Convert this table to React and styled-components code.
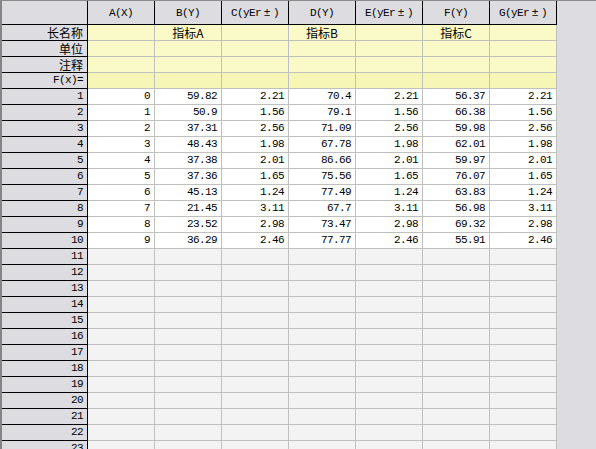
import React from "react";
import styled, { createGlobalStyle } from "styled-components";

const Global = createGlobalStyle`
  html, body { margin: 0; padding: 0; overflow: hidden; background: #dcdce1; }
  body { font-family: "Liberation Mono", monospace; color: #000; }
`;

const Page = styled.div`
  width: 596px;
  height: 449px;
  border-top: 1px solid #8a8a8a;
  box-sizing: border-box;
  overflow: hidden;
  background: #dcdce1;
`;

const Sheet = styled.div`
  width: 557px;
  box-sizing: border-box;
  border-left: 2px solid #858585;
  display: grid;
  grid-template-columns: 86px repeat(7, 67px);
  grid-auto-rows: 16px;
  grid-template-rows: 24px;
`;

const Base = styled.div`
  box-sizing: border-box;
  display: flex;
  align-items: center;
  white-space: nowrap;
  overflow: hidden;
  border-right: 1px solid #c0c0c0;
  border-bottom: 1px solid #c0c0c0;
`;

const Corner = styled(Base)`
  background: #dcdce1;
  border-right-color: #000;
  border-bottom-color: #000;
`;

const ColHead = styled(Base)`
  background: #dcdce1;
  border-right-color: #000;
  border-bottom-color: #000;
  justify-content: center;
  font-family: "Liberation Mono", monospace;
  font-size: 11px;
  letter-spacing: -0.6px;
`;

const Pm = styled.span`
  display: inline-block;
  width: 12px;
  text-align: center;
  letter-spacing: 0;
`;

const RowHead = styled(Base)`
  background: #dcdce1;
  border-right-color: #000;
  border-bottom-color: #000;
  justify-content: flex-end;
  padding-right: 4px;
  padding-bottom: ${(p) => (p.$cjk ? "0" : "2px")};
  font-family: ${(p) => (p.$cjk ? '"Noto Sans CJK SC", sans-serif' : '"Liberation Mono", monospace')};
  font-size: ${(p) => (p.$cjk ? "12px" : "11px")};
  letter-spacing: ${(p) => (p.$cjk ? "0" : "-0.6px")};
`;

const LabelCell = styled(Base)`
  background: ${(p) => (p.$fx ? "#f6f6b6" : "#fafac8")};
  justify-content: center;
  font-family: "Noto Sans CJK SC", sans-serif;
  font-size: 12px;
`;

const Cell = styled(Base)`
  background: ${(p) => (p.$empty ? "#f3f3f3" : "#ffffff")};
  justify-content: flex-end;
  padding-right: 4px;
  padding-bottom: 2px;
  font-family: "Liberation Mono", monospace;
  font-size: 11px;
  letter-spacing: -0.6px;
`;

const cols = [
  { name: "A(X)" },
  { name: "B(Y)", long: "指标A" },
  { name: "C(yEr", err: true },
  { name: "D(Y)", long: "指标B" },
  { name: "E(yEr", err: true },
  { name: "F(Y)", long: "指标C" },
  { name: "G(yEr", err: true },
];

const err = [2.21, 1.56, 2.56, 1.98, 2.01, 1.65, 1.24, 3.11, 2.98, 2.46];
const B = [59.82, 50.9, 37.31, 48.43, 37.38, 37.36, 45.13, 21.45, 23.52, 36.29];
const D = [70.4, 79.1, 71.09, 67.78, 86.66, 75.56, 77.49, 67.7, 73.47, 77.77];
const F = [56.37, 66.38, 59.98, 62.01, 59.97, 76.07, 63.83, 56.98, 69.32, 55.91];

const data = B.map((b, i) => [i, b, err[i], D[i], err[i], F[i], err[i]]);

const labelRows = [
  { label: "长名称", cjk: true, key: "long" },
  { label: "单位", cjk: true },
  { label: "注释", cjk: true },
  { label: "F(x)=", fx: true },
];

export default function App() {
  const emptyRows = [];
  for (let r = 11; r <= 23; r++) emptyRows.push(r);
  return (
    <>
      <Global />
      <Page>
        <Sheet>
          <Corner />
          {cols.map((c) => (
            <ColHead key={c.name}>
              {c.name}
              {c.err && (
                <>
                  <Pm>±</Pm>)
                </>
              )}
            </ColHead>
          ))}

          {labelRows.map((lr) => (
            <React.Fragment key={lr.label}>
              <RowHead $cjk={lr.cjk}>{lr.label}</RowHead>
              {cols.map((c) => (
                <LabelCell key={c.name} $fx={lr.fx}>
                  {lr.key === "long" ? c.long || "" : ""}
                </LabelCell>
              ))}
            </React.Fragment>
          ))}

          {data.map((row, i) => (
            <React.Fragment key={i}>
              <RowHead>{i + 1}</RowHead>
              {row.map((v, j) => (
                <Cell key={j}>{v}</Cell>
              ))}
            </React.Fragment>
          ))}

          {emptyRows.map((r) => (
            <React.Fragment key={r}>
              <RowHead>{r}</RowHead>
              {cols.map((c) => (
                <Cell key={c.name} $empty />
              ))}
            </React.Fragment>
          ))}
        </Sheet>
      </Page>
    </>
  );
}
